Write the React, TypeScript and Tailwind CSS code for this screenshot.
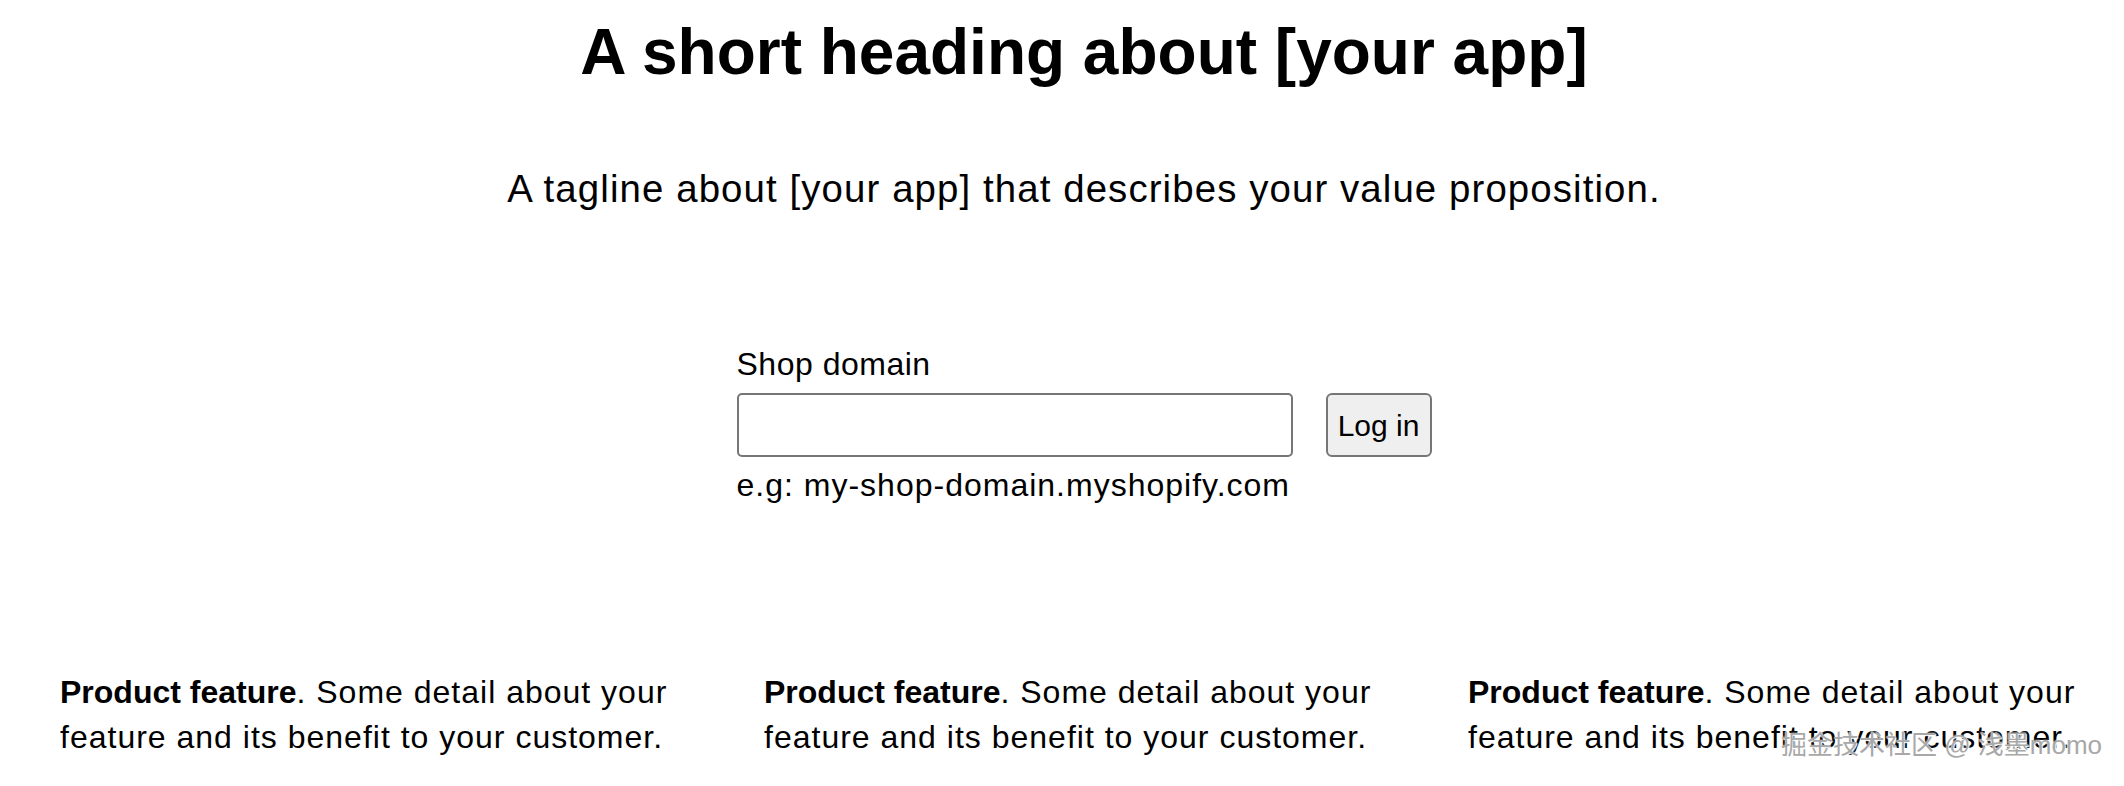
const features = [1, 2, 3];

export default function App() {
  return (
    <div className="relative min-h-[786px] overflow-hidden bg-white font-['Liberation_Sans',Arial,sans-serif] text-black">
      <div className="flex flex-col items-center pl-[44px] pt-[15px] text-center">
        <h1 className="text-[64px] font-bold leading-[74px]">A short heading about [your app]</h1>
        <p className="mt-[78px] text-[38.4px] leading-[44px] tracking-[1.1px]">
          A tagline about [your app] that describes your value proposition.
        </p>

        <form className="mt-[135px] flex items-center gap-[33px]" onSubmit={(e) => e.preventDefault()}>
          <label className="grid w-[556px] gap-[10px] text-left text-[32px] leading-[37px]">
            <span className="tracking-[0.5px]">Shop domain</span>
            <input
              type="text"
              name="shop"
              className="h-[64px] w-full rounded-[5px] border-2 border-[#767676] bg-white px-[13px] text-[32px] outline-none"
            />
            <span className="whitespace-nowrap tracking-[1px]">e.g: my-shop-domain.myshopify.com</span>
          </label>
          <button
            type="submit"
            className="flex h-[64px] w-[106px] items-center justify-center rounded-[6px] border-2 border-[#767676] bg-[#efefef] text-[30px] leading-[37px]"
          >
            Log in
          </button>
        </form>

        <ul className="mt-[166px] flex gap-[64px]">
          {features.map((n) => (
            <li key={n} className="w-[640px] text-left text-[32px] leading-[45px] tracking-[1px]">
              <strong className="font-bold tracking-normal">Product feature</strong>. Some detail about your
              feature and its benefit to your customer.
            </li>
          ))}
        </ul>
      </div>

      {/* watermark baked into the screenshot */}
      <div className="absolute right-[22px] top-[731px] font-['Liberation_Sans','Noto_Sans_CJK_SC',sans-serif] text-[26px] leading-[28px] text-[#a8a8a8] [text-shadow:0_0_2px_#fff,1px_1px_1px_#fff]">
        掘金技术社区 @ 浅墨momo
      </div>
    </div>
  );
}
